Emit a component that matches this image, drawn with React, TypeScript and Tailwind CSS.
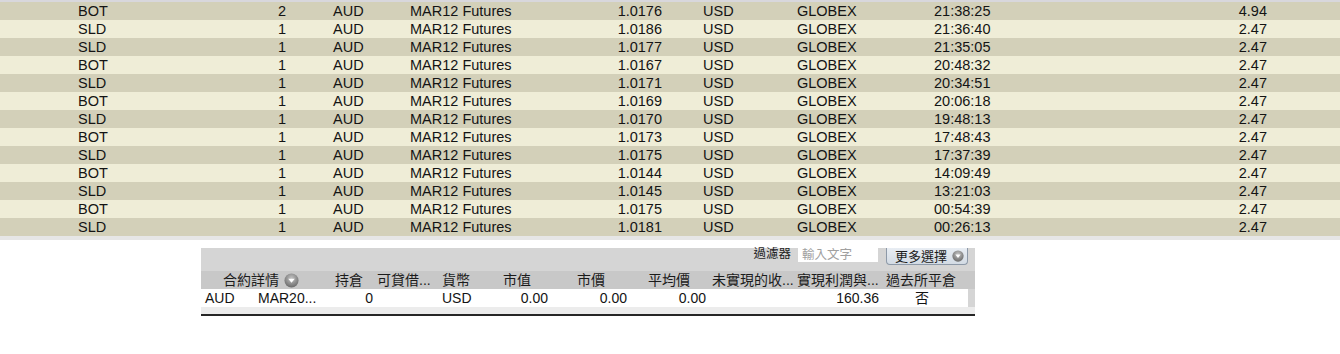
const trades = [
    { side: "BOT", qty: 2, price: "1.0176", time: "21:38:25", comm: "4.94" },
    { side: "SLD", qty: 1, price: "1.0186", time: "21:36:40", comm: "2.47" },
    { side: "SLD", qty: 1, price: "1.0177", time: "21:35:05", comm: "2.47" },
    { side: "BOT", qty: 1, price: "1.0167", time: "20:48:32", comm: "2.47" },
    { side: "SLD", qty: 1, price: "1.0171", time: "20:34:51", comm: "2.47" },
    { side: "BOT", qty: 1, price: "1.0169", time: "20:06:18", comm: "2.47" },
    { side: "SLD", qty: 1, price: "1.0170", time: "19:48:13", comm: "2.47" },
    { side: "BOT", qty: 1, price: "1.0173", time: "17:48:43", comm: "2.47" },
    { side: "SLD", qty: 1, price: "1.0175", time: "17:37:39", comm: "2.47" },
    { side: "BOT", qty: 1, price: "1.0144", time: "14:09:49", comm: "2.47" },
    { side: "SLD", qty: 1, price: "1.0145", time: "13:21:03", comm: "2.47" },
    { side: "BOT", qty: 1, price: "1.0175", time: "00:54:39", comm: "2.47" },
    { side: "SLD", qty: 1, price: "1.0181", time: "00:26:13", comm: "2.47" },
];

const font = "font-['Liberation_Sans','Noto_Sans_CJK_TC',sans-serif]";

// small round grey button with a white down arrow
const DropIcon = ({ size }: { size: number }) => (
    <svg width={size} height={size} viewBox="0 0 16 16" className="inline-block shrink-0">
        <defs>
            <radialGradient id={`g${size}`} cx="50%" cy="35%" r="65%">
                <stop offset="0%" stopColor="#c4c4c4" />
                <stop offset="100%" stopColor="#6a6a6a" />
            </radialGradient>
        </defs>
        <circle cx="8" cy="8" r="7.5" fill={`url(#g${size})`} />
        <path d="M4.5 6 L11.5 6 L8 10.5 Z" fill="#fff" />
    </svg>
);

const TradeRow = ({ t, dark }: { t: typeof trades[number]; dark: boolean }) => (
    <div className={`flex h-[18px] items-center pl-[78px] text-[14.5px] leading-[18px] text-[#141414] ${dark ? "bg-[#d3d0b9]" : "bg-[#efedd7]"}`}>
        <span className="w-[150px]">{t.side}</span>
        <span className="w-[58px] text-right">{t.qty}</span>
        <span className="w-[124px] pl-[47px]">AUD</span>
        <span className="w-[150px]">MAR12 Futures</span>
        <span className="w-[102px] text-right">{t.price}</span>
        <span className="w-[135px] pl-[41px]">USD</span>
        <span className="w-[137px]">GLOBEX</span>
        <span className="w-[166px]">{t.time}</span>
        <span className="w-[167px] text-right">{t.comm}</span>
    </div>
);

const headers: { label: string; w: string }[] = [
    { label: "持倉", w: "w-[42px]" },
    { label: "可貸借...", w: "w-[65px]" },
    { label: "貨幣", w: "w-[61px]" },
    { label: "市值", w: "w-[74px]" },
    { label: "市價", w: "w-[71px]" },
    { label: "平均價", w: "w-[64px]" },
    { label: "未實現的收...", w: "w-[85px]" },
    { label: "實現利潤與...", w: "w-[89px]" },
    { label: "過去所平倉", w: "w-[82px]" },
];

export default function App() {
    return (
        <div className={`w-[1340px] h-[354px] bg-white ${font}`}>
            <div className="h-[2px] bg-[#d8d7dc]" />
            {trades.map((t, i) => (
                <TradeRow key={i} t={t} dark={i % 2 === 0} />
            ))}
            <div className="h-[4px] bg-[#e6e6e6]" />

            <div className="ml-[201px] mt-[8px] w-[774px] bg-[#d5d5d5] border-b-2 border-[#262626]">
                <div className="flex h-[23px] items-start justify-end pr-[7px]">
                    <span className="mr-[7px] text-[12.5px] leading-[13px] text-[#1e1e1e]">過濾器</span>
                    <div className="mr-[8px] h-[14px] w-[80px] bg-white pl-[4px] text-[12.5px] leading-[14px] text-[#a0a0a0]">輸入文字</div>
                    <button className="flex h-[17px] w-[82px] items-center gap-[5px] rounded-b-[4px] border border-t-0 border-[#8d99a8] bg-gradient-to-b from-[#e8edf3] to-[#d3dbe4] pl-[8px] text-[13px] leading-[15px] text-[#1c1c1c]">
                        更多選擇
                        <DropIcon size={12} />
                    </button>
                </div>
                <div className="flex h-[18px] items-center bg-[#c8c8c8] text-[14px] leading-[18px] text-[#1b1b1b]">
                    <div className="flex w-[134px] items-center gap-[5px] pl-[22px]">
                        合約詳情
                        <DropIcon size={15} />
                    </div>
                    {headers.map((h) => (
                        <div key={h.label} className={`${h.w} whitespace-nowrap`}>{h.label}</div>
                    ))}
                </div>
                <div className="flex">
                    <div className="flex h-[18px] w-[767px] items-center bg-white text-[14px] leading-[18px] text-[#141414]">
                        <span className="w-[57px] pl-[4px]">AUD</span>
                        <span className="w-[77px]">MAR20...</span>
                        <span className="w-[38px] text-right">0</span>
                        <span className="w-[69px]" />
                        <span className="w-[61px]">USD</span>
                        <span className="w-[45px] text-right">0.00</span>
                        <span className="w-[79px] text-right">0.00</span>
                        <span className="w-[79px] text-right">0.00</span>
                        <span className="w-[173px] text-right">160.36</span>
                        <span className="w-[86px] text-center">否</span>
                    </div>
                </div>
                <div className="h-[7px] bg-[#ececec]" />
            </div>
        </div>
    );
}
